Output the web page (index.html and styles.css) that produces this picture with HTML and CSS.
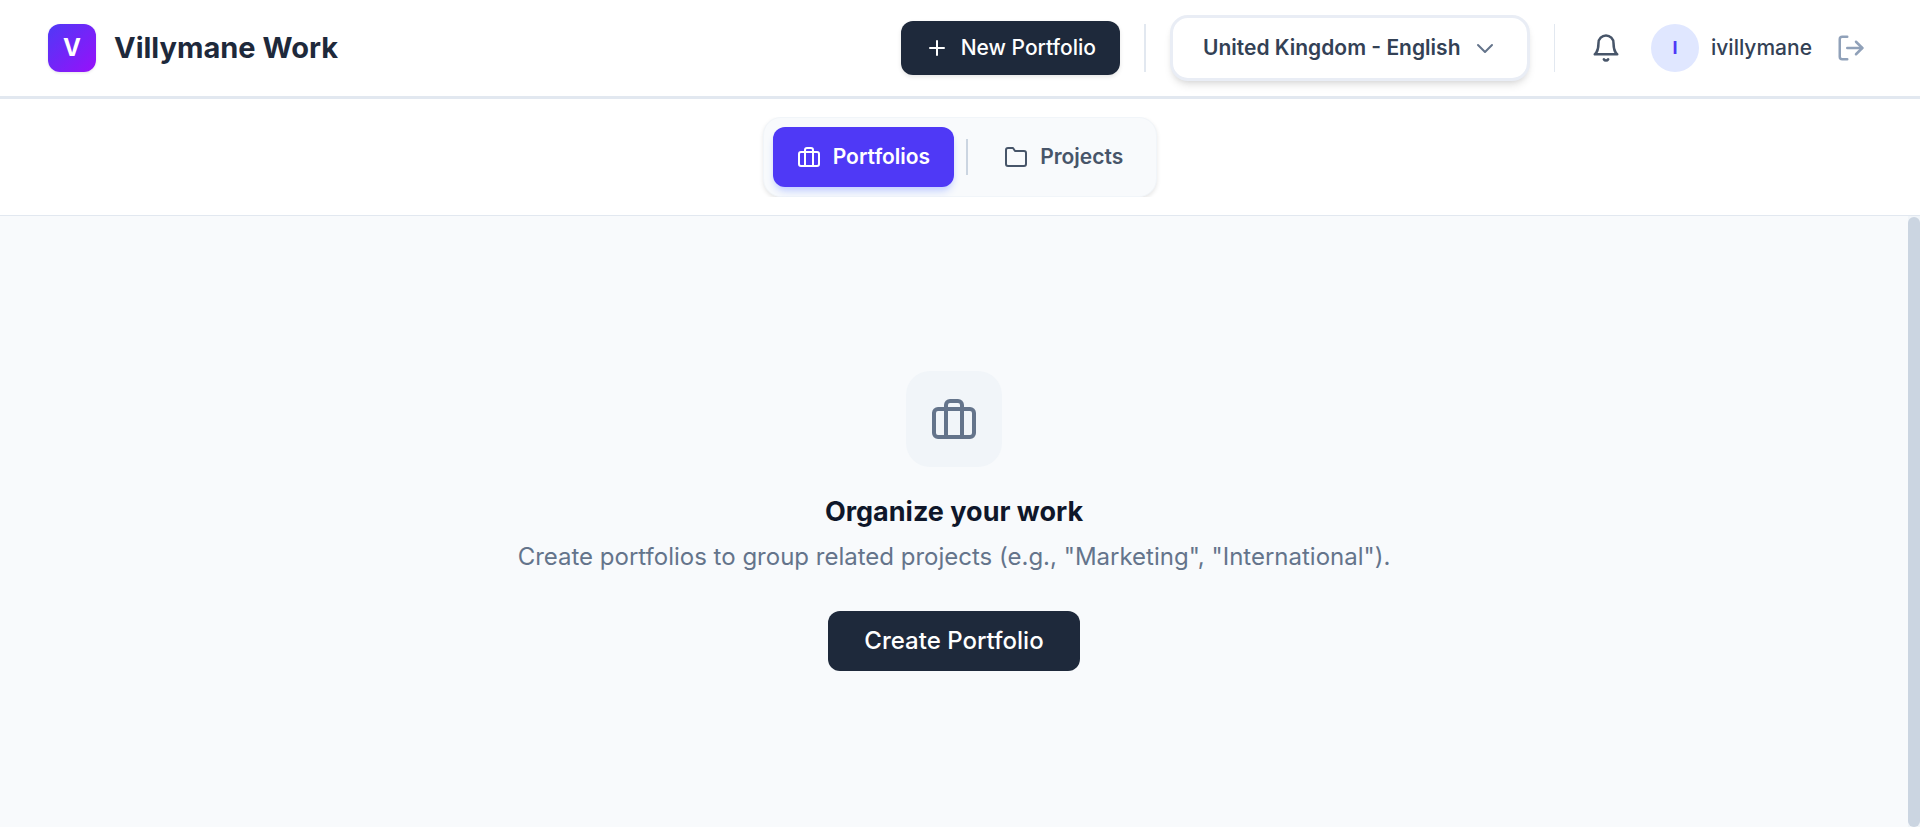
FILE: index.html
```html
<!DOCTYPE html>
<html lang="en">
<head>
  <meta charset="UTF-8" />
  <meta name="viewport" content="width=device-width, initial-scale=1.0" />
  <title>Villymane Work</title>
  <link rel="stylesheet" href="styles.css">
</head>
<body>

<header class="header">
  <div class="brand">
    <div class="brand-logo">V</div>
    <h1 class="brand-name">Villymane Work</h1>
  </div>

  <div class="header-actions">
    <button type="button" class="btn btn-new">
      <svg class="icon" viewBox="0 0 24 24"><path d="M12 5v14M5 12h14" /></svg>
      New Portfolio
    </button>
    <div class="divider divider-thick"></div>
    <div class="locale">
      <select class="locale-select" aria-label="Region and language">
        <option>United Kingdom - English</option>
      </select>
      <svg class="icon locale-chevron" viewBox="0 0 24 24"><path d="M5 9l7 7 7-7" /></svg>
    </div>
    <div class="divider"></div>
    <div class="user-area">
      <button type="button" class="icon-btn bell-btn" aria-label="Notifications">
        <svg class="icon icon-md" viewBox="0 0 24 24">
          <path d="M18 8A6 6 0 0 0 6 8c0 7-3 9-3 9h18s-3-2-3-9" />
          <path d="M13.73 21a2 2 0 0 1-3.46 0" />
        </svg>
      </button>
      <div class="user">
        <div class="avatar">I</div>
        <span class="user-name">ivillymane</span>
      </div>
      <button type="button" class="icon-btn logout-btn" aria-label="Log out">
        <svg class="icon icon-md" viewBox="0 0 24 24">
          <path d="M9 21H5a2 2 0 0 1-2-2V5a2 2 0 0 1 2-2h4" />
          <path d="M16 17l5-5-5-5" />
          <path d="M21 12H9" />
        </svg>
      </button>
    </div>
  </div>
</header>

<nav class="tab-bar">
  <div class="tab-scroll">
    <div class="tabs">
      <button type="button" class="btn tab tab-active">
        <svg class="icon" viewBox="0 0 24 24">
          <rect x="2" y="7" width="20" height="14" rx="2" />
          <path d="M16 21V5a2 2 0 0 0-2-2h-4a2 2 0 0 0-2 2v16" />
        </svg>
        Portfolios
      </button>
      <div class="tab-divider"></div>
      <button type="button" class="btn tab">
        <svg class="icon" viewBox="0 0 24 24">
          <path d="M22 19a2 2 0 0 1-2 2H4a2 2 0 0 1-2-2V5a2 2 0 0 1 2-2h5l2 3h9a2 2 0 0 1 2 2z" />
        </svg>
        Projects
      </button>
    </div>
  </div>
</nav>

<div class="content">
  <main class="empty-state">
    <div class="empty-icon">
      <svg class="icon icon-lg" viewBox="0 0 24 24">
        <rect x="2" y="7" width="20" height="14" rx="2" />
        <path d="M16 21V5a2 2 0 0 0-2-2h-4a2 2 0 0 0-2 2v16" />
      </svg>
    </div>
    <h2>Organize your work</h2>
    <p>Create portfolios to group related projects (e.g., "Marketing", "International").</p>
    <button type="button" class="btn btn-create">Create Portfolio</button>
  </main>
  <div class="scroll-track" aria-hidden="true">
    <div class="scroll-thumb"></div>
  </div>
</div>

</body>
</html>
```
FILE: styles.css
```css
* {
  box-sizing: border-box;
}

body {
  margin: 0;
  height: 100vh;
  display: flex;
  flex-direction: column;
  overflow: hidden;
  font-family: 'Inter', sans-serif;
  font-size: 21px;
  line-height: 30px;
  color: #1e293b;
  background: #ffffff;
}

button, select {
  font-family: inherit;
  font-size: inherit;
  line-height: inherit;
  cursor: pointer;
}

.icon {
  width: 24px;
  height: 24px;
  flex-shrink: 0;
  display: block;
  fill: none;
  stroke: currentColor;
  stroke-width: 2;
  stroke-linecap: round;
  stroke-linejoin: round;
}

.icon-md {
  width: 30px;
  height: 30px;
}

.icon-lg {
  width: 48px;
  height: 48px;
}

.btn {
  display: flex;
  align-items: center;
  gap: 12px;
  padding: 12px 24px;
  border: none;
  border-radius: 12px;
  font-weight: 500;
  white-space: nowrap;
}

/* header */

.header {
  display: flex;
  align-items: center;
  justify-content: space-between;
  min-height: 99px;
  padding: 0 48px;
  border-bottom: 3px solid #e2e8f0;
}

.brand, .header-actions, .user-area, .user {
  display: flex;
  align-items: center;
}

.brand {
  gap: 18px;
}

.brand-logo {
  width: 48px;
  height: 48px;
  display: flex;
  align-items: center;
  justify-content: center;
  border-radius: 12px;
  background: linear-gradient(135deg, #4f39f6, #9810fa);
  box-shadow: 0 1px 3px rgba(0, 0, 0, 0.1);
  color: #ffffff;
  font-size: 24px;
  font-weight: 700;
}

.brand-name {
  margin: 0;
  font-size: 29px;
  font-weight: 700;
}

.header-actions {
  gap: 24px;
}

.btn-new {
  background: #1e293b;
  color: #ffffff;
  box-shadow: 0 2px 4px rgba(0, 0, 0, 0.1);
}

.divider {
  width: 1px;
  height: 48px;
  background: #e2e8f0;
}

.divider-thick {
  width: 2px;
}

.locale {
  position: relative;
}

.locale-select {
  appearance: none;
  height: 66px;
  padding: 0 66px 0 30px;
  border: 3px solid #e9edf5;
  border-radius: 18px;
  background: #ffffff;
  color: #334155;
  font-weight: 600;
  box-shadow: 0 6px 9px -2px rgba(0, 0, 0, 0.1), 0 3px 6px -3px rgba(0, 0, 0, 0.1);
}

.locale-chevron {
  position: absolute;
  right: 33px;
  top: 21px;
  color: #64748b;
  pointer-events: none;
}

.user-area {
  gap: 18px;
}

.user {
  gap: 12px;
}

.icon-btn {
  border: none;
  background: none;
}

.bell-btn {
  padding: 12px;
  color: #475569;
}

.logout-btn {
  padding: 6px;
  color: #90a1b9;
}

.avatar {
  width: 48px;
  height: 48px;
  display: flex;
  align-items: center;
  justify-content: center;
  border-radius: 50%;
  background: #e0e7ff;
  color: #4f39f6;
  font-size: 18px;
  font-weight: 700;
}

.user-name {
  color: #334155;
  font-weight: 500;
}

/* tabs */

.tab-bar {
  padding: 18px 0;
  border-bottom: 1px solid #e2e8f0;
}

.tab-scroll {
  display: flex;
  justify-content: center;
  overflow: hidden;
}

.tabs {
  display: flex;
  align-items: center;
  gap: 12px;
  padding: 9px;
  border: 1px solid #f1f5f9;
  border-radius: 18px;
  background: #f8fafc;
  box-shadow: 0 2px 4px rgba(0, 0, 0, 0.1);
}

.tab {
  padding: 15px 24px;
  background: none;
  color: #475569;
  font-weight: 600;
}

.tab-active {
  background: #4f39f6;
  color: #ffffff;
  box-shadow: 0 6px 9px -2px #c6d2ff, 0 3px 6px -3px #c6d2ff;
}

.tab-divider {
  width: 2px;
  height: 36px;
  background: #cbd5e1;
}

/* content */

.content {
  flex: 1;
  display: flex;
  min-height: 0;
  background: #f8fafc;
}

.empty-state {
  flex: 1;
  display: flex;
  flex-direction: column;
  align-items: center;
  justify-content: center;
  padding-bottom: 2px;
  text-align: center;
}

.empty-icon {
  display: flex;
  padding: 24px;
  margin-bottom: 24px;
  border-radius: 24px;
  background: #f1f5f9;
  color: #64748b;
}

.empty-state h2 {
  margin: 0 0 6px;
  font-size: 27px;
  line-height: 42px;
  font-weight: 700;
  color: #0f172a;
}

.empty-state p {
  margin: 0 0 36px;
  font-size: 24px;
  line-height: 36px;
  color: #64748b;
}

.btn-create {
  padding: 12px 36px;
  background: #1e293b;
  color: #ffffff;
  font-size: 24px;
  line-height: 36px;
}

.scroll-track {
  width: 12px;
  display: flex;
  padding-top: 1px;
  background: #f1f5f9;
}

.scroll-thumb {
  flex: 1;
  border-radius: 6px;
  background: #cbd5e1;
}
```
